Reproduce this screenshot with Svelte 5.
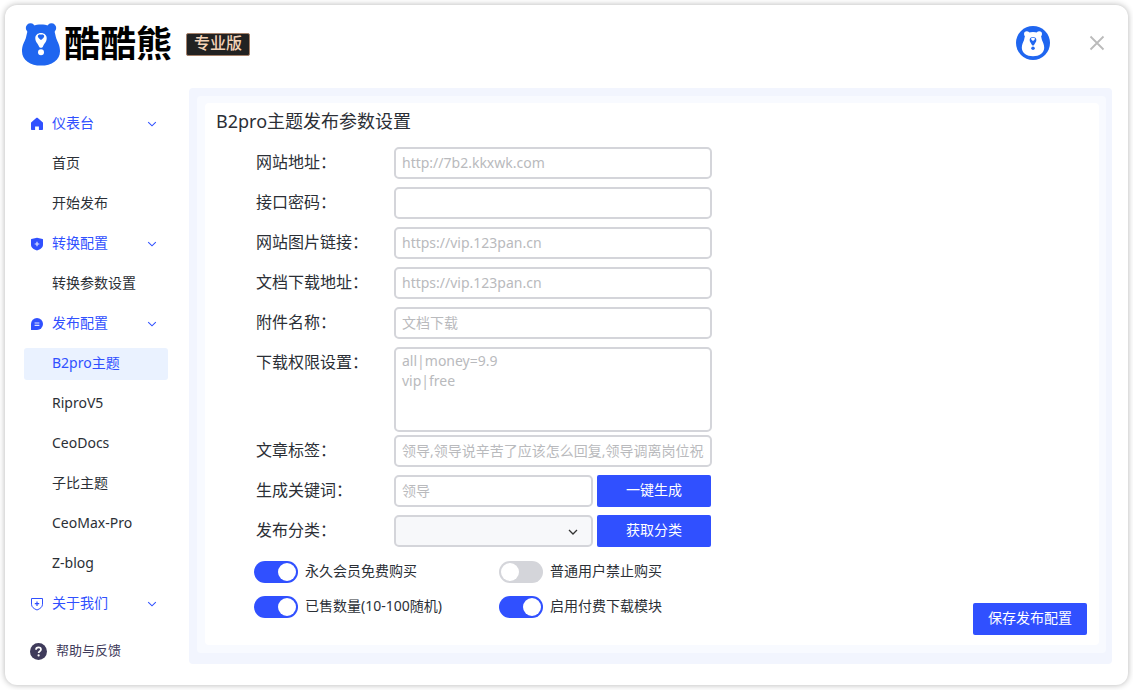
<script>
	let menu = [
		{
			title: '仪表台',
			icon: 'home',
			items: ['首页', '开始发布']
		},
		{
			title: '转换配置',
			icon: 'shield',
			items: ['转换参数设置']
		},
		{
			title: '发布配置',
			icon: 'chat',
			items: ['B2pro主题', 'RiproV5', 'CeoDocs', '子比主题', 'CeoMax-Pro', 'Z-blog']
		},
		{
			title: '关于我们',
			icon: 'shield-line',
			items: []
		}
	];

	let active = 'B2pro主题';

	let fields = [
		{ id: 'site', label: '网站地址：', placeholder: 'http://7b2.kkxwk.com' },
		{ id: 'secret', label: '接口密码：', placeholder: '' },
		{ id: 'image', label: '网站图片链接：', placeholder: 'https://vip.123pan.cn' },
		{ id: 'doc', label: '文档下载地址：', placeholder: 'https://vip.123pan.cn' },
		{ id: 'attach', label: '附件名称：', placeholder: '文档下载' }
	];

	let switches = [
		{ id: 'free', label: '永久会员免费购买', on: true },
		{ id: 'forbid', label: '普通用户禁止购买', on: false },
		{ id: 'sold', label: '已售数量(10-100随机)', on: true },
		{ id: 'paid', label: '启用付费下载模块', on: true }
	];
</script>

{#snippet bear(main, hole)}
	<circle cx="8.500" cy="5" r="4.700" fill={main} />
	<circle cx="29.500" cy="5" r="4.700" fill={main} />
	<path
		fill={main}
		d="M19 1.600c-5.500 0-11 2-13 5.600-1.300 2.400-1.300 5.400-2.300 8.300C2.400 19 0 22.500 0 28.200 0 37 8.400 42.600 19 42.600s19-5.600 19-14.400c0-5.700-2.400-9.200-3.700-12.700-1-2.900-1-5.900-2.300-8.300-2-3.600-7.500-5.600-13-5.600z"
	/>
	<path
		fill={hole}
		d="M19 10c-3.300 0-5.700 2.200-5.700 5.200 0 3.500 2.700 5.500 3.700 8.200.3.900 1.100 1.400 2 1.400s1.700-.5 2-1.400c1-2.700 3.700-4.700 3.700-8.200 0-3-2.400-5.200-5.700-5.200z"
	/>
	<path fill={main} d="M19 11.800c1-.7 3.200-.2 3.200 1.500 0 1.500-1.900 2.800-3.200 3.700-1.300-.9-3.200-2.200-3.200-3.700 0-1.700 2.200-2.200 3.200-1.500z" />
	<circle cx="19" cy="29.200" r="3" fill={hole} />
{/snippet}

<div class="window">
	<header>
		<div class="brand">
			<svg class="bear" viewBox="0 0 38 43">{@render bear('#1f66f0', '#fff')}</svg>
			<h1>酷酷熊</h1>
			<span class="badge">专业版</span>
		</div>
		<div class="tools">
			<button class="avatar" aria-label="账户">
				<svg viewBox="0 0 34 34">
					<circle cx="17" cy="17" r="17" fill="#1f66f0" />
					<g transform="translate(5.800 5) scale(.59)">{@render bear('#fff', '#1f66f0')}</g>
				</svg>
			</button>
			<button class="close" aria-label="关闭">
				<svg viewBox="0 0 16 16"><path d="M1.500 1.500l13 13M14.500 1.500l-13 13" /></svg>
			</button>
		</div>
	</header>

	<div class="body">
		<aside>
			<nav>
				{#each menu as group}
					<button class="group">
						<svg class="icon" viewBox="0 0 14 14">
							{#if group.icon === 'home'}
								<path fill="currentColor" d="M7 .8c.3 0 .6.1.8.300l4.800 4.100c.3.200.4.500.4.900v5.900c0 .6-.4 1-1 1H8.900V9.400H5.100V13H2c-.6 0-1-.4-1-1V6.100c0-.4.1-.7.4-.9l4.800-4.100c.2-.2.500-.3.800-.3z" />
							{:else if group.icon === 'shield'}
								<path fill="currentColor" d="M7 .8l5.600 1.300c.2 0 .4.200.4.400v5c0 3.300-2.600 4.800-6 6.100-3.400-1.300-6-2.800-6-6.100v-5c0-.2.2-.4.4-.4z" />
								<path class="plus" d="M7 4.700v4.600M4.700 7h4.600" />
							{:else if group.icon === 'chat'}
								<path fill="currentColor" d="M7 1a6 6 0 1 1 0 12H1.600a.6.6 0 0 1-.6-.6V7a6 6 0 0 1 6-6z" />
								<path class="plus" d="M4.600 6h4.800M4.600 8.300h4.800" />
							{:else}
								<path fill="none" stroke="currentColor" d="M1.500 1.500h11v5.700c0 3-2.300 4.400-5.500 5.800-3.200-1.400-5.500-2.800-5.500-5.800z" />
								<path stroke="currentColor" stroke-width="1.200" d="M7 4.500v4.400M4.800 6.700h4.400" />
							{/if}
						</svg>
						<span>{group.title}</span>
						<svg class="arrow" viewBox="0 0 10 10"><path d="M1.200 3.200L5 6.800l3.800-3.600" /></svg>
					</button>
					{#each group.items as item}
						<a href="#menu" class:active={item === active}>{item}</a>
					{/each}
				{/each}
			</nav>
			<a href="#help" class="help">
				<svg viewBox="0 0 17 17">
					<circle cx="8.500" cy="8.500" r="8.500" fill="#3f3b5b" />
					<path d="M6 6.800c0-1.500 1.100-2.400 2.500-2.400s2.500.9 2.500 2.200c0 1.600-2.400 1.700-2.400 3.400" fill="none" stroke="#fff" stroke-width="1.700" />
					<circle cx="8.600" cy="12.400" r="1.100" fill="#fff" />
				</svg>
				<span>帮助与反馈</span>
			</a>
		</aside>

		<main>
			<div class="layer">
				<form onsubmit={(e) => e.preventDefault()}>
					<h2>B2pro主题发布参数设置</h2>
					<div class="rows">
						{#each fields as field}
							<div class="row">
								<label for={field.id}>{field.label}</label>
								<input type="text" id={field.id} placeholder={field.placeholder} />
							</div>
						{/each}
						<div class="row area">
							<label for="auth">下载权限设置：</label>
							<textarea id="auth" placeholder={'all|money=9.9\nvip|free'}></textarea>
						</div>
						<div class="row">
							<label for="tags">文章标签：</label>
							<input type="text" id="tags" placeholder="领导,领导说辛苦了应该怎么回复,领导调离岗位祝福语" />
						</div>
						<div class="row">
							<label for="keyword">生成关键词：</label>
							<div class="combo">
								<input type="text" id="keyword" placeholder="领导" />
								<button type="button" class="primary">一键生成</button>
							</div>
						</div>
						<div class="row">
							<label for="category">发布分类：</label>
							<div class="combo">
								<div class="select">
									<select id="category"></select>
									<svg viewBox="0 0 10 10"><path d="M1 3l4 4 4-4" /></svg>
								</div>
								<button type="button" class="primary">获取分类</button>
							</div>
						</div>
					</div>
					<div class="bottom">
						<div class="switches">
							{#each switches as item}
								<label class="switch" for={item.id}>
									<input type="checkbox" role="switch" id={item.id} bind:checked={item.on} />
									<span>{item.label}</span>
								</label>
							{/each}
						</div>
						<button class="primary">保存发布配置</button>
					</div>
				</form>
			</div>
		</main>
	</div>
</div>

<style>
	:global(body) {
		background: #fff;
	}

	:global(#app) {
		padding: 5px 0;
	}

	.window {
		box-sizing: border-box;
		display: flex;
		flex-direction: column;
		min-height: calc(100vh - 10px);
		margin: 0 5px;
		border-radius: 12px;
		background: #fff;
		box-shadow: 0 0 6px rgba(0, 0, 0, 0.3);
		color: #2b2f36;
		font-family: 'Noto Sans', 'Noto Sans CJK SC', sans-serif;
		font-size: 14px;
		line-height: 20px;
	}

	button,
	input,
	select,
	textarea {
		box-sizing: border-box;
		margin: 0;
		font: inherit;
	}

	button {
		padding: 0;
		border: 0;
		background: none;
		cursor: pointer;
	}

	a {
		color: inherit;
		text-decoration: none;
	}

	svg {
		display: block;
		flex: none;
	}

	header {
		display: flex;
		justify-content: space-between;
		height: 78px;
		padding: 0 23px 5px 17px;
	}

	.brand,
	.tools {
		display: flex;
		align-items: center;
	}

	.bear {
		width: 38px;
		height: 43px;
	}

	h1 {
		margin: 0 14px 0 4px;
		color: #000;
		font-size: 36px;
		font-weight: 700;
		line-height: 40px;
	}

	.badge {
		padding: 0 7px 2px;
		border: 1px solid #a58069;
		border-radius: 2px;
		background: #222;
		color: #f3d3b8;
		font-size: 16px;
		font-weight: 500;
		line-height: 19px;
	}

	.tools {
		gap: 39px;
		padding-bottom: 2px;
	}

	.avatar svg {
		width: 34px;
		height: 34px;
	}

	.close svg {
		width: 16px;
		height: 16px;
		fill: none;
		stroke: #bbb;
		stroke-width: 1.8;
	}

	.body {
		display: flex;
		flex: 1;
		padding: 0 16px 21px 19px;
	}

	aside {
		flex: none;
		width: 144px;
		margin-right: 21px;
		padding-top: 20px;
	}

	nav {
		display: flex;
		flex-direction: column;
		gap: 8px;
	}

	nav a,
	.group {
		height: 32px;
		border-radius: 3px;
		line-height: 30px;
	}

	nav a {
		padding-left: 28px;
	}

	nav a.active {
		background: #eaf2ff;
		color: #3050ff;
	}

	.group {
		display: flex;
		align-items: center;
		padding: 0 11px 0 6px;
		color: #3050ff;
	}

	.group span {
		padding-bottom: 2px;
	}

	.icon {
		width: 14px;
		height: 14px;
		margin-right: 8px;
	}

	.plus {
		fill: none;
		stroke: #dfe5ff;
		stroke-width: 1.2;
	}

	.arrow {
		width: 10px;
		height: 10px;
		margin-left: auto;
		fill: none;
		stroke: currentColor;
		stroke-width: 1.1;
	}

	.help {
		display: flex;
		align-items: center;
		gap: 9px;
		margin-top: 20px;
		padding-left: 6px;
		color: #3f3b5b;
		font-size: 13px;
	}

	.help span {
		padding-bottom: 2px;
	}

	.help svg {
		width: 17px;
		height: 17px;
	}

	main {
		display: flex;
		flex: 1;
		padding: 8px 6px 11px 8px;
		border-radius: 4px;
		background: #f2f5fe;
	}

	.layer {
		display: flex;
		flex: 1;
		padding: 7px 7px 8px 8px;
		border-radius: 4px;
		background: #f8faff;
	}

	form {
		display: flex;
		flex: 1;
		flex-direction: column;
		padding: 0 12px 10px 11px;
		border-radius: 4px;
		background: #fff;
	}

	h2 {
		margin: 0 0 8px;
		font-size: 18px;
		font-weight: 400;
		line-height: 36px;
	}

	.rows {
		display: flex;
		flex-direction: column;
		gap: 8px;
		padding-left: 40px;
	}

	.row {
		display: grid;
		grid-template-columns: 138px 318px;
	}

	.row > label {
		font-size: 16px;
		line-height: 30px;
	}

	.row input,
	.row select,
	textarea {
		width: 100%;
		height: 32px;
		padding: 0 6px 2px;
		border: 2px solid #d4d5da;
		border-radius: 5px;
		outline: 0;
		background: #fff;
		color: inherit;
	}

	.row textarea {
		height: 85px;
		padding-top: 2px;
		resize: none;
	}

	.area {
		margin-bottom: -5px;
	}

	::placeholder {
		color: #b9babd;
		opacity: 1;
	}

	.combo {
		display: grid;
		grid-template-columns: 199px 114px;
		gap: 4px;
	}

	.select {
		position: relative;
	}

	.row select {
		appearance: none;
		background: #f7f8fa;
	}

	.select svg {
		position: absolute;
		top: 12px;
		right: 15px;
		width: 10px;
		height: 10px;
		fill: none;
		stroke: #333;
		stroke-width: 1.3;
		pointer-events: none;
	}

	.primary {
		width: 114px;
		height: 32px;
		padding-bottom: 2px;
		border-radius: 2px;
		background: #3050ff;
		color: #fff;
	}

	.bottom {
		display: flex;
		flex: 1;
		align-items: flex-end;
		justify-content: space-between;
		padding-left: 38px;
	}

	.switches {
		display: grid;
		align-self: flex-start;
		grid-template-columns: 245px 245px;
		gap: 13px 0;
		margin-top: 14px;
	}

	.switch {
		display: flex;
		align-items: center;
		gap: 7px;
		height: 22px;
	}

	.switch span {
		padding-bottom: 2px;
	}

	.switch input {
		display: flex;
		align-items: center;
		appearance: none;
		width: 44px;
		height: 22px;
		padding: 0 2px;
		border-radius: 11px;
		background: #d4d5da;
	}

	.switch input::before {
		width: 18px;
		height: 18px;
		border-radius: 50%;
		background: #fff;
		content: '';
	}

	.switch input:checked {
		justify-content: flex-end;
		background: #3050ff;
	}
</style>
